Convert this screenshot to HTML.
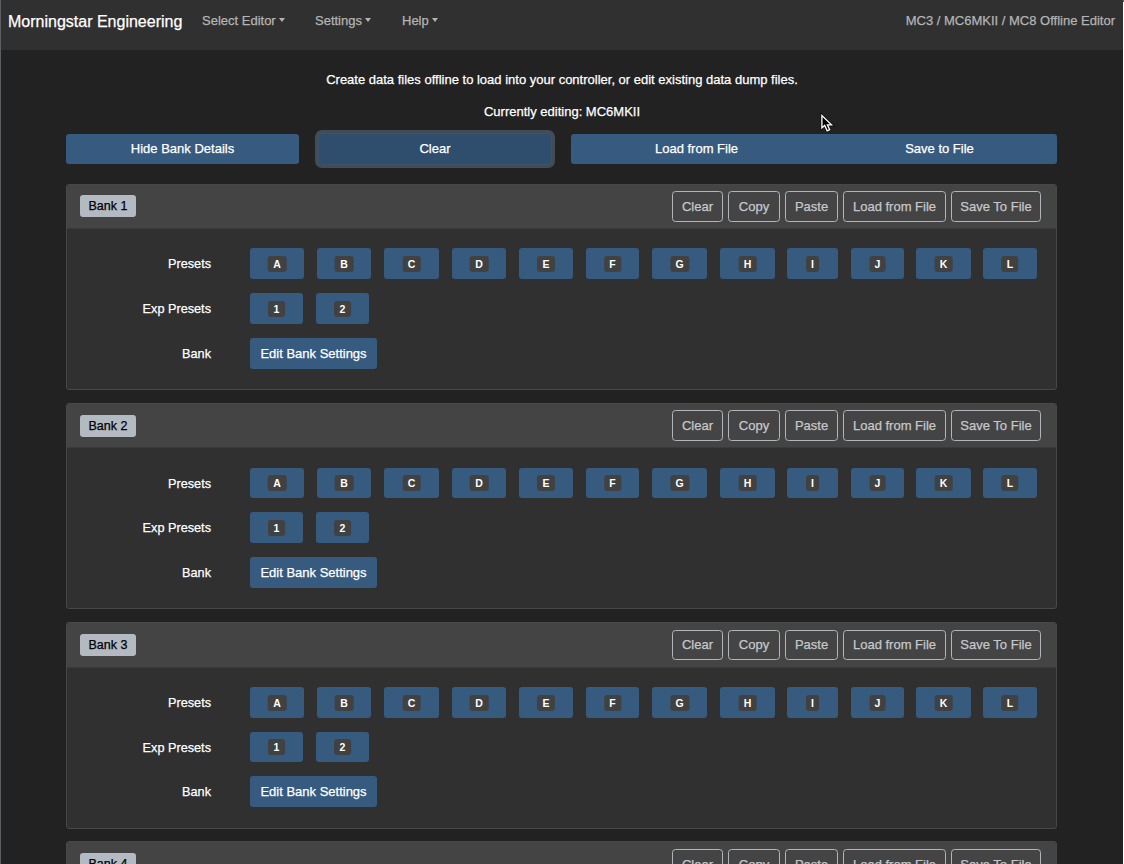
<!DOCTYPE html>
<html><head><meta charset="utf-8">
<style>
*{box-sizing:border-box}
html,body{margin:0;padding:0}
body{width:1124px;height:864px;overflow:hidden;background:#222;position:relative;font-family:"Liberation Sans",sans-serif;color:#fff;font-size:13px;-webkit-text-stroke:0.25px currentColor}
.abs{position:absolute;white-space:nowrap}
.nav{position:absolute;left:0;top:0;width:1124px;height:50px;background:#303030}
.brand{font-size:16px;color:#fff;left:8px;top:10px;line-height:24px}
.nl{font-size:13px;color:#b4b4b4;top:11px;line-height:20px}
.caret{display:inline-block;width:0;height:0;border-left:3.6px solid transparent;border-right:3.6px solid transparent;border-top:4px solid #b4b4b4;vertical-align:3.2px;margin-left:3.5px;-webkit-text-stroke:0}
.btn{position:absolute;background:#375a7f;color:#fff;border-radius:3px;text-align:center;font-size:13px;line-height:30px;height:30px;white-space:nowrap}
.eb{height:31px;line-height:31px}
.card{position:absolute;left:66px;width:991px;height:206px;background:#303030;border:1px solid #484848;border-radius:3px;overflow:hidden}
.ch{position:absolute;left:0;top:0;width:100%;height:44px;background:#444;border-bottom:1px solid #3a3a3a}
.bb{position:absolute;left:13px;top:10px;height:22px;line-height:22px;padding:0 8.5px;background:#b3bac2;color:#000;font-size:12.5px;border-radius:3px;white-space:nowrap}
.ob{position:absolute;top:6px;height:31px;line-height:29px;border:1px solid #b0b6bc;border-radius:3.5px;color:#c4c8cc;font-size:13px;text-align:center;white-space:nowrap}
.lbl{position:absolute;right:845px;font-size:12.7px;color:#fff;line-height:31px;text-align:right;white-space:nowrap}
.pb{position:absolute;height:31px;background:#375a7f;border-radius:3px}
.pb span{position:absolute;left:50%;top:8px;transform:translateX(-50%);height:16px;line-height:16px;padding:0 5.5px;background:#414141;border-radius:3px;font-size:10.5px;font-weight:bold;color:#fff;-webkit-text-stroke:0}

</style></head><body>
<div class="nav">
  <div class="abs brand">Morningstar Engineering</div>
  <div class="abs nl" style="left:202px">Select Editor<i class="caret"></i></div>
  <div class="abs nl" style="left:315px">Settings<i class="caret"></i></div>
  <div class="abs nl" style="left:402px">Help<i class="caret"></i></div>
  <div class="abs nl" style="right:9px">MC3 / MC6MKII / MC8 Offline Editor</div>
</div>
<div class="abs" style="left:0;width:1124px;text-align:center;top:71px;line-height:18px">Create data files offline to load into your controller, or edit existing data dump files.</div>
<div class="abs" style="left:0;width:1124px;text-align:center;top:103px;line-height:18px">Currently editing: MC6MKII</div>

<div class="btn" style="left:66px;top:134px;width:233px">Hide Bank Details</div>
<div class="btn" style="left:319px;top:134px;width:232px;background:#2f4d6c;box-shadow:0 0 0 1px #3f5266,0 0 0 4px #434c56">Clear</div>
<div class="btn" style="left:571px;top:134px;width:486px"><span class="abs" style="left:0;width:251px;text-align:center">Load from File</span><span class="abs" style="left:251px;width:235px;text-align:center">Save to File</span></div>

<div class="card" style="top:184px;height:206px"><div class="ch" style="height:44px"></div><div class="bb" style="top:10px">Bank 1</div><div class="ob" style="left:605px;width:51px;top:6px;height:31px;line-height:29px">Clear</div><div class="ob" style="left:661px;width:52px;top:6px;height:31px;line-height:29px">Copy</div><div class="ob" style="left:718px;width:53px;top:6px;height:31px;line-height:29px">Paste</div><div class="ob" style="left:776px;width:103px;top:6px;height:31px;line-height:29px">Load from File</div><div class="ob" style="left:884px;width:90px;top:6px;height:31px;line-height:29px">Save To File</div><div class="lbl" style="top:64px">Presets</div><div class="lbl" style="top:109px">Exp Presets</div><div class="lbl" style="top:154px">Bank</div><div class="pb" style="top:63px;height:31px;left:183px;width:54px"><span style="top:8px">A</span></div><div class="pb" style="top:63px;height:31px;left:250px;width:54px"><span style="top:8px">B</span></div><div class="pb" style="top:63px;height:31px;left:317px;width:55px"><span style="top:8px">C</span></div><div class="pb" style="top:63px;height:31px;left:385px;width:54px"><span style="top:8px">D</span></div><div class="pb" style="top:63px;height:31px;left:452px;width:54px"><span style="top:8px">E</span></div><div class="pb" style="top:63px;height:31px;left:519px;width:53px"><span style="top:8px">F</span></div><div class="pb" style="top:63px;height:31px;left:585px;width:55px"><span style="top:8px">G</span></div><div class="pb" style="top:63px;height:31px;left:653px;width:55px"><span style="top:8px">H</span></div><div class="pb" style="top:63px;height:31px;left:720px;width:51px"><span style="top:8px">I</span></div><div class="pb" style="top:63px;height:31px;left:784px;width:53px"><span style="top:8px">J</span></div><div class="pb" style="top:63px;height:31px;left:849px;width:55px"><span style="top:8px">K</span></div><div class="pb" style="top:63px;height:31px;left:916px;width:54px"><span style="top:8px">L</span></div><div class="pb" style="top:108px;height:31px;left:183px;width:53px"><span style="padding:0 6px">1</span></div><div class="pb" style="top:108px;height:31px;left:249px;width:53px"><span style="padding:0 6px">2</span></div><div class="btn eb" style="top:153px;height:31px;line-height:31px;left:183px;width:127px">Edit Bank Settings</div></div>
<div class="card" style="top:403px;height:206px"><div class="ch" style="height:44px"></div><div class="bb" style="top:11px">Bank 2</div><div class="ob" style="left:605px;width:51px;top:6px;height:31px;line-height:29px">Clear</div><div class="ob" style="left:661px;width:52px;top:6px;height:31px;line-height:29px">Copy</div><div class="ob" style="left:718px;width:53px;top:6px;height:31px;line-height:29px">Paste</div><div class="ob" style="left:776px;width:103px;top:6px;height:31px;line-height:29px">Load from File</div><div class="ob" style="left:884px;width:90px;top:6px;height:31px;line-height:29px">Save To File</div><div class="lbl" style="top:65px">Presets</div><div class="lbl" style="top:109px">Exp Presets</div><div class="lbl" style="top:154px">Bank</div><div class="pb" style="top:64px;height:30px;left:183px;width:54px"><span style="top:7px">A</span></div><div class="pb" style="top:64px;height:30px;left:250px;width:54px"><span style="top:7px">B</span></div><div class="pb" style="top:64px;height:30px;left:317px;width:55px"><span style="top:7px">C</span></div><div class="pb" style="top:64px;height:30px;left:385px;width:54px"><span style="top:7px">D</span></div><div class="pb" style="top:64px;height:30px;left:452px;width:54px"><span style="top:7px">E</span></div><div class="pb" style="top:64px;height:30px;left:519px;width:53px"><span style="top:7px">F</span></div><div class="pb" style="top:64px;height:30px;left:585px;width:55px"><span style="top:7px">G</span></div><div class="pb" style="top:64px;height:30px;left:653px;width:55px"><span style="top:7px">H</span></div><div class="pb" style="top:64px;height:30px;left:720px;width:51px"><span style="top:7px">I</span></div><div class="pb" style="top:64px;height:30px;left:784px;width:53px"><span style="top:7px">J</span></div><div class="pb" style="top:64px;height:30px;left:849px;width:55px"><span style="top:7px">K</span></div><div class="pb" style="top:64px;height:30px;left:916px;width:54px"><span style="top:7px">L</span></div><div class="pb" style="top:108px;height:31px;left:183px;width:53px"><span style="padding:0 6px">1</span></div><div class="pb" style="top:108px;height:31px;left:249px;width:53px"><span style="padding:0 6px">2</span></div><div class="btn eb" style="top:153px;height:31px;line-height:31px;left:183px;width:127px">Edit Bank Settings</div></div>
<div class="card" style="top:622px;height:207px"><div class="ch" style="height:45px"></div><div class="bb" style="top:11px">Bank 3</div><div class="ob" style="left:605px;width:51px;top:7px;height:30px;line-height:28px">Clear</div><div class="ob" style="left:661px;width:52px;top:7px;height:30px;line-height:28px">Copy</div><div class="ob" style="left:718px;width:53px;top:7px;height:30px;line-height:28px">Paste</div><div class="ob" style="left:776px;width:103px;top:7px;height:30px;line-height:28px">Load from File</div><div class="ob" style="left:884px;width:90px;top:7px;height:30px;line-height:28px">Save To File</div><div class="lbl" style="top:65px">Presets</div><div class="lbl" style="top:110px">Exp Presets</div><div class="lbl" style="top:154px">Bank</div><div class="pb" style="top:64px;height:31px;left:183px;width:54px"><span style="top:8px">A</span></div><div class="pb" style="top:64px;height:31px;left:250px;width:54px"><span style="top:8px">B</span></div><div class="pb" style="top:64px;height:31px;left:317px;width:55px"><span style="top:8px">C</span></div><div class="pb" style="top:64px;height:31px;left:385px;width:54px"><span style="top:8px">D</span></div><div class="pb" style="top:64px;height:31px;left:452px;width:54px"><span style="top:8px">E</span></div><div class="pb" style="top:64px;height:31px;left:519px;width:53px"><span style="top:8px">F</span></div><div class="pb" style="top:64px;height:31px;left:585px;width:55px"><span style="top:8px">G</span></div><div class="pb" style="top:64px;height:31px;left:653px;width:55px"><span style="top:8px">H</span></div><div class="pb" style="top:64px;height:31px;left:720px;width:51px"><span style="top:8px">I</span></div><div class="pb" style="top:64px;height:31px;left:784px;width:53px"><span style="top:8px">J</span></div><div class="pb" style="top:64px;height:31px;left:849px;width:55px"><span style="top:8px">K</span></div><div class="pb" style="top:64px;height:31px;left:916px;width:54px"><span style="top:8px">L</span></div><div class="pb" style="top:109px;height:30px;left:183px;width:53px"><span style="top:7px;padding:0 6px">1</span></div><div class="pb" style="top:109px;height:30px;left:249px;width:53px"><span style="top:7px;padding:0 6px">2</span></div><div class="btn eb" style="top:153px;height:31px;line-height:31px;left:183px;width:127px">Edit Bank Settings</div></div>
<div class="card" style="top:841px;height:206px"><div class="ch" style="height:44px"></div><div class="bb" style="top:11px">Bank 4</div><div class="ob" style="left:605px;width:51px;top:7px;height:31px;line-height:29px">Clear</div><div class="ob" style="left:661px;width:52px;top:7px;height:31px;line-height:29px">Copy</div><div class="ob" style="left:718px;width:53px;top:7px;height:31px;line-height:29px">Paste</div><div class="ob" style="left:776px;width:103px;top:7px;height:31px;line-height:29px">Load from File</div><div class="ob" style="left:884px;width:90px;top:7px;height:31px;line-height:29px">Save To File</div><div class="lbl" style="top:65px">Presets</div><div class="lbl" style="top:110px">Exp Presets</div><div class="lbl" style="top:155px">Bank</div><div class="pb" style="top:64px;height:31px;left:183px;width:54px"><span style="top:8px">A</span></div><div class="pb" style="top:64px;height:31px;left:250px;width:54px"><span style="top:8px">B</span></div><div class="pb" style="top:64px;height:31px;left:317px;width:55px"><span style="top:8px">C</span></div><div class="pb" style="top:64px;height:31px;left:385px;width:54px"><span style="top:8px">D</span></div><div class="pb" style="top:64px;height:31px;left:452px;width:54px"><span style="top:8px">E</span></div><div class="pb" style="top:64px;height:31px;left:519px;width:53px"><span style="top:8px">F</span></div><div class="pb" style="top:64px;height:31px;left:585px;width:55px"><span style="top:8px">G</span></div><div class="pb" style="top:64px;height:31px;left:653px;width:55px"><span style="top:8px">H</span></div><div class="pb" style="top:64px;height:31px;left:720px;width:51px"><span style="top:8px">I</span></div><div class="pb" style="top:64px;height:31px;left:784px;width:53px"><span style="top:8px">J</span></div><div class="pb" style="top:64px;height:31px;left:849px;width:55px"><span style="top:8px">K</span></div><div class="pb" style="top:64px;height:31px;left:916px;width:54px"><span style="top:8px">L</span></div><div class="pb" style="top:109px;height:31px;left:183px;width:53px"><span style="padding:0 6px">1</span></div><div class="pb" style="top:109px;height:31px;left:249px;width:53px"><span style="padding:0 6px">2</span></div><div class="btn eb" style="top:154px;height:31px;line-height:31px;left:183px;width:127px">Edit Bank Settings</div></div>

<svg class="abs" style="left:815px;top:108px" width="24" height="28" viewBox="815 108 24 28"><path d="M821.9 115.6 L821.9 127.9 L824.7 125.4 L827.2 130.8 L829.7 129.7 L827.4 124.9 L831.5 124.9 Z" fill="#000" stroke="#000" stroke-width="3" stroke-opacity="0.5" stroke-linejoin="miter"/><path d="M821.9 115.6 L821.9 127.9 L824.7 125.4 L827.2 130.8 L829.7 129.7 L827.4 124.9 L831.5 124.9 Z" fill="#000" stroke="#fff" stroke-width="1.3" stroke-linejoin="miter"/></svg>
<div class="abs" style="left:0;top:0;width:1px;height:864px;background:#5b5f62"></div>
<div class="abs" style="left:1123px;top:0;width:1px;height:2px;background:#6a6a6a"></div><div class="abs" style="left:1123px;top:2px;width:1px;height:862px;background:#fff"></div>

</body></html>
